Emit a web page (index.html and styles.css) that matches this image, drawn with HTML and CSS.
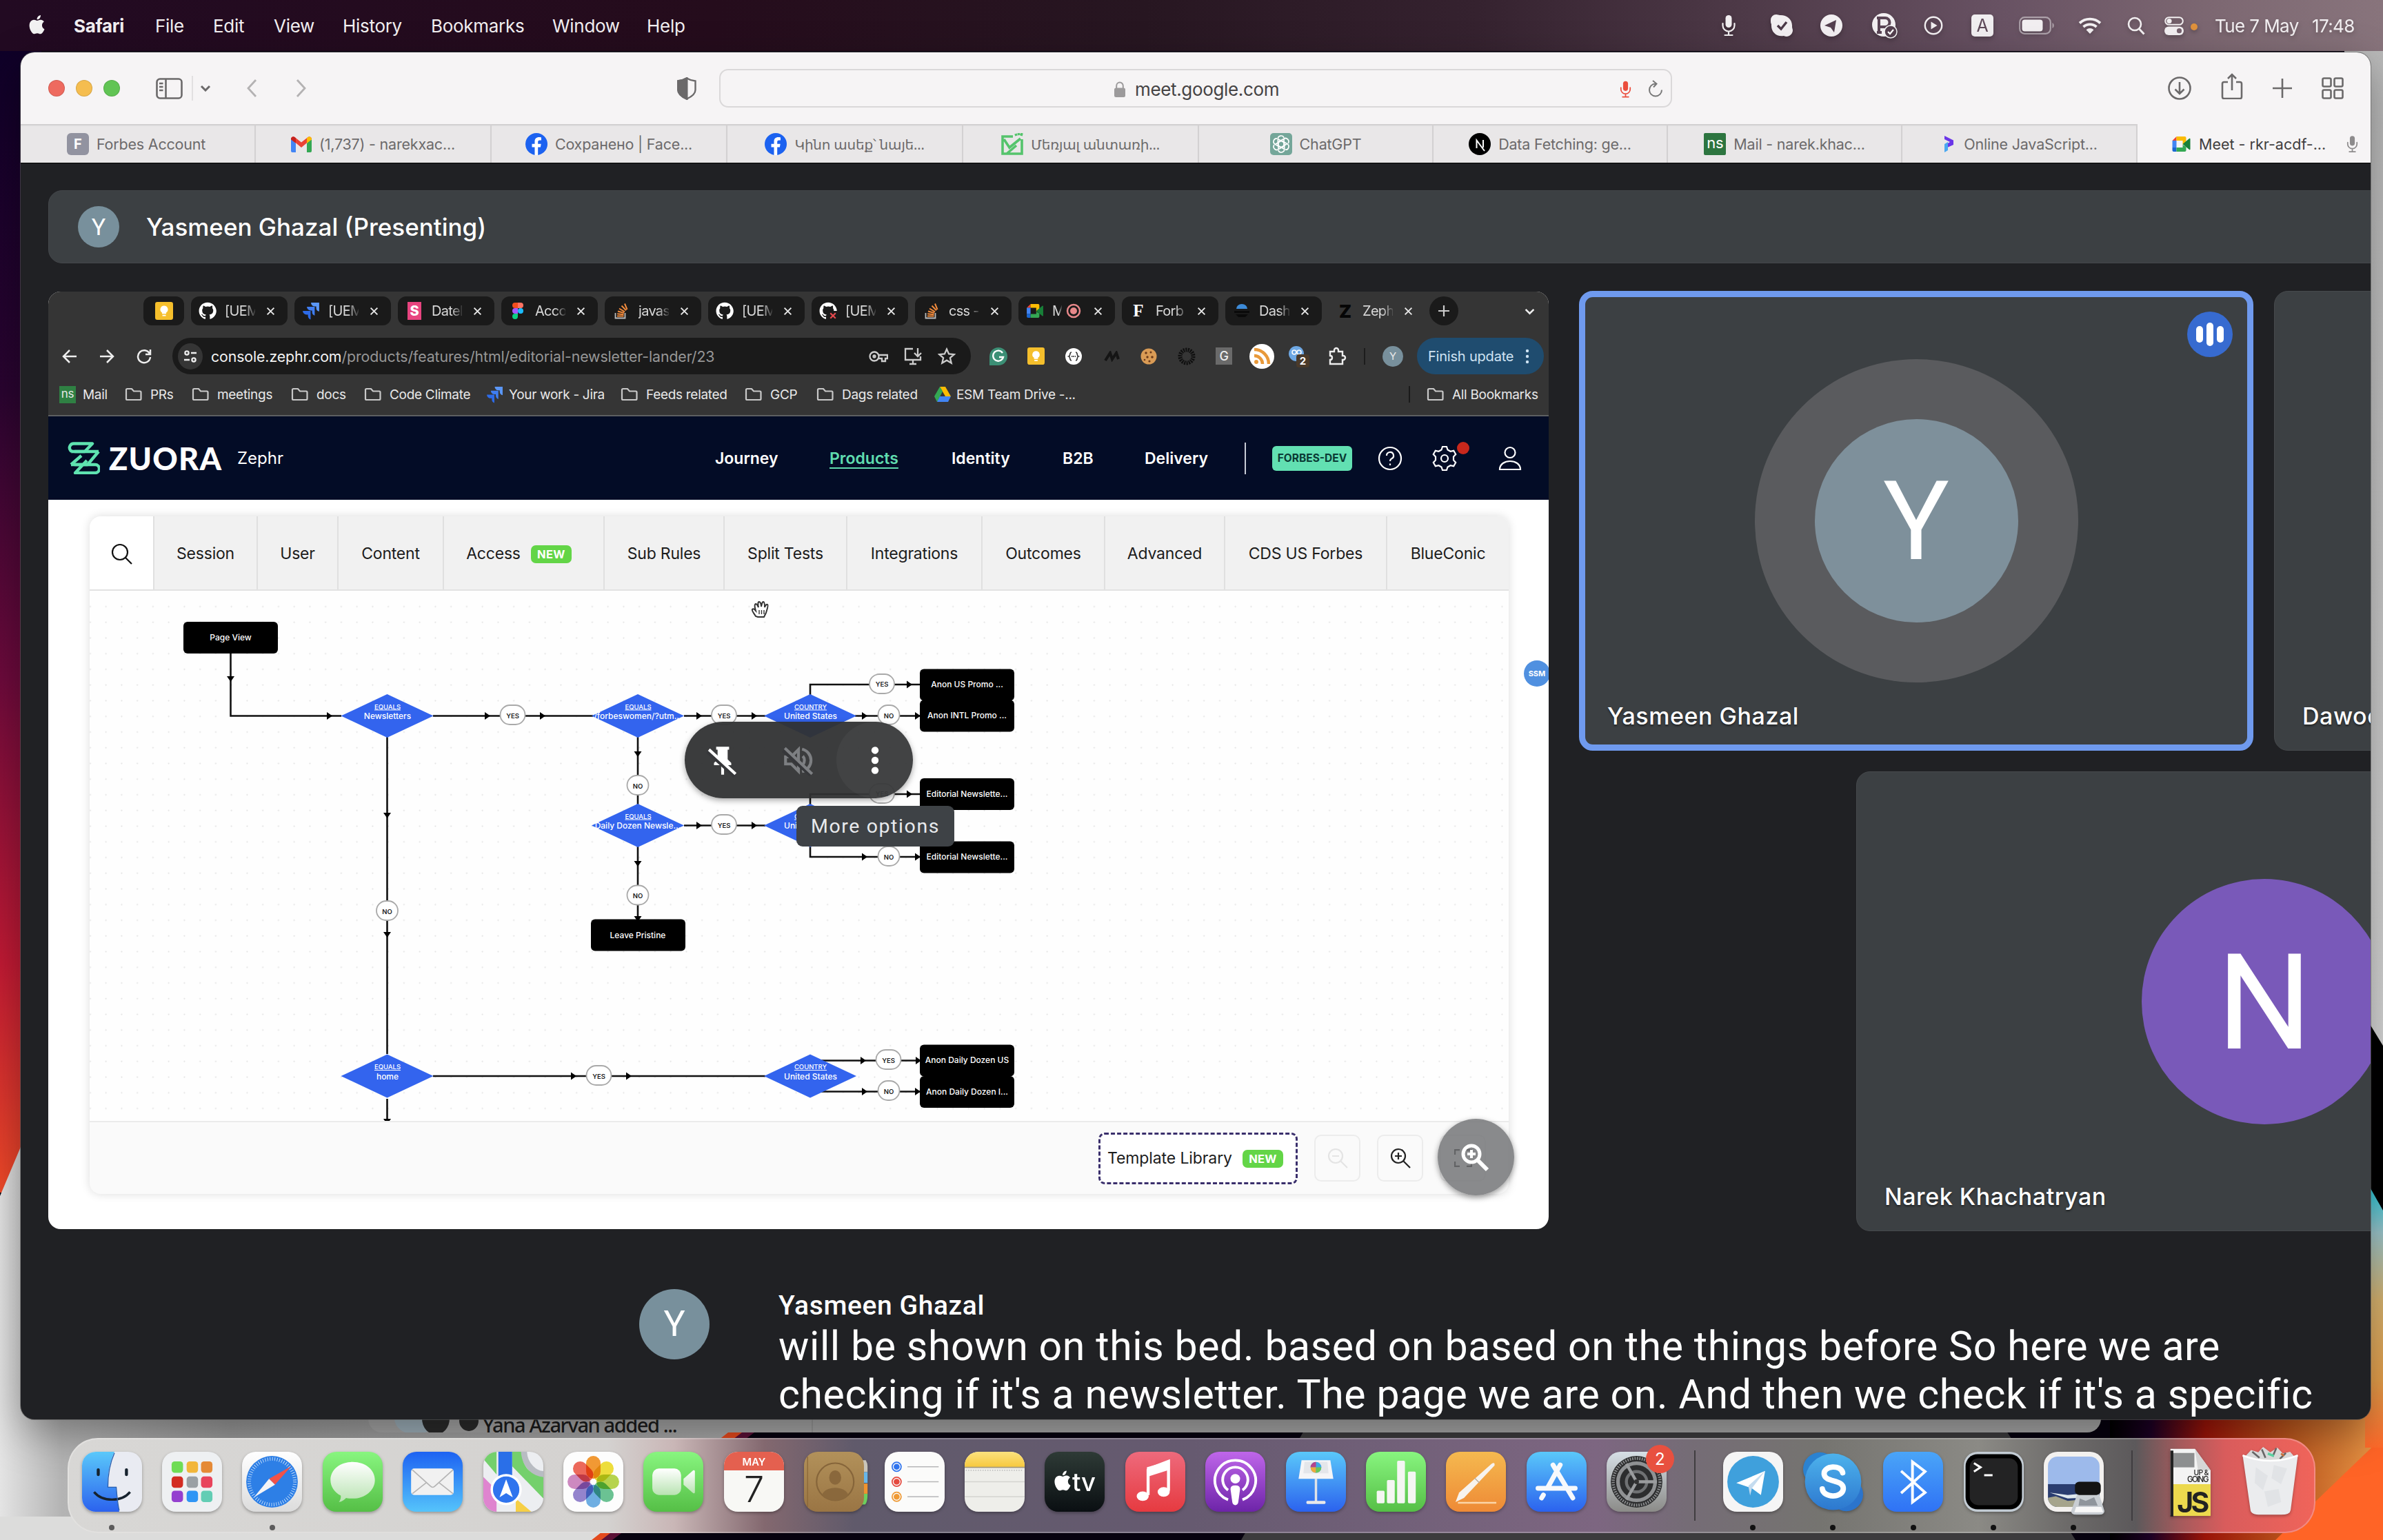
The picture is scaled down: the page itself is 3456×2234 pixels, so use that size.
FILE: index.html
```html
<!DOCTYPE html>
<html lang="en">
<head>
<meta charset="utf-8">
<title>Meet</title>
<link rel="stylesheet" href="styles.css">
</head>
<body>
<svg class="sprite" aria-hidden="true">
  <defs>
    <symbol id="i-apple" viewBox="0 0 24 28"><path d="M19.700 15c0-3 2.400-4.400 2.500-4.500-1.400-2-3.500-2.300-4.300-2.300-1.800-.2-3.500 1.100-4.400 1.100-.9 0-2.300-1.100-3.800-1-2 0-3.800 1.100-4.800 2.900-2 3.500-.5 8.800 1.500 11.700 1 1.400 2.100 3 3.600 2.900 1.500-.1 2-.9 3.800-.9s2.300.9 3.800.9c1.600 0 2.600-1.400 3.500-2.800 1.100-1.600 1.600-3.200 1.600-3.300 0 0-3-1.200-3-4.700zM16.800 6.200c.8-1 1.300-2.300 1.200-3.700-1.200.1-2.600.8-3.400 1.800-.8.9-1.400 2.200-1.200 3.500 1.300.1 2.600-.6 3.400-1.600z"/></symbol>
    <symbol id="i-mic" viewBox="0 0 24 32"><rect x="7.500" y="1" width="9" height="18" rx="4.500"/><path d="M3.500 13v3a8.500 8.500 0 0 0 17 0v-3M12 25v5M6.500 30h11" fill="none" stroke="currentColor" stroke-width="2.200" stroke-linecap="round"/></symbol>
    <symbol id="i-close" viewBox="0 0 12 12"><path d="M1.500 1.500l9 9M10.500 1.500l-9 9" stroke="currentColor" stroke-width="1.800" fill="none"/></symbol>
    <symbol id="i-folder" viewBox="0 0 25 20"><path d="M2 3.500A1.500 1.500 0 0 1 3.500 2h6.500l3 3.500h9A1.500 1.500 0 0 1 23.500 7v9.500A1.500 1.500 0 0 1 22 18H3.500A1.500 1.500 0 0 1 2 16.500z" fill="none" stroke="currentColor" stroke-width="2.200"/></symbol>
    <symbol id="i-github" viewBox="0 0 24 24"><path d="M12 .6C5.600.6.500 5.700.500 12c0 5.100 3.300 9.400 7.900 10.900.6.100.8-.2.800-.6v-2.200c-3.200.7-3.900-1.400-3.900-1.400-.5-1.300-1.300-1.700-1.300-1.700-1-.7.100-.7.100-.7 1.200.1 1.800 1.200 1.800 1.200 1 1.800 2.700 1.300 3.400 1 .1-.8.400-1.300.7-1.500-2.500-.3-5.200-1.300-5.200-5.700 0-1.300.4-2.300 1.200-3.100-.1-.3-.5-1.500.1-3 0 0 1-.3 3.200 1.200a11 11 0 0 1 5.800 0C17.300 4.900 18.300 5.200 18.300 5.200c.6 1.500.2 2.700.1 3 .7.800 1.200 1.800 1.200 3.100 0 4.400-2.700 5.400-5.300 5.700.4.400.8 1.100.8 2.100v3.200c0 .3.200.7.800.6 4.600-1.500 7.900-5.800 7.900-10.900C23.500 5.700 18.400.6 12 .6z"/></symbol>
    <symbol id="i-jira" viewBox="0 0 24 24"><path d="M23 1H12a5 5 0 0 0 5 5h2v2a5 5 0 0 0 4 4.800z" fill="#5b97f7"/><path d="M17 6.500H6.500a5 5 0 0 0 5 5h2v2a5 5 0 0 0 3.500 4.700z" fill="#3f7df0"/><path d="M11.500 12H1a5 5 0 0 0 5 5h2v2a5 5 0 0 0 3.500 4.500z" fill="#2d6be8"/></symbol>
    <symbol id="i-stack" viewBox="0 0 24 24"><path d="M3.500 15v7.500h14V15" fill="none" stroke="#bbb" stroke-width="1.800"/><path d="M6 19.500h9.500M6.200 16.300l9.300.9M7 12.500l9 2.500M9 8.500l8 4.800M12.500 4.500l6.500 6.800M17 1.500l3.500 8.500" stroke="#f08a3c" stroke-width="2" fill="none"/></symbol>
    <symbol id="i-keep" viewBox="0 0 24 24"><rect width="24" height="24" rx="3" fill="#f5bf2c"/><path d="M12 5a5 5 0 0 0-2.800 9.200V16h5.600v-1.800A5 5 0 0 0 12 5zM9.700 17.200h4.600V19H9.700z" fill="#fff"/></symbol>
    <symbol id="i-meet" viewBox="0 0 28 24"><path d="M1 7l6-6v6z" fill="#ea4335"/><path d="M7 1h12a2 2 0 0 1 2 2v7l-5 3V7H7z" fill="#fbbc04"/><path d="M1 7h6v10H1z" fill="#4285f4"/><path d="M1 17h6v6H3a2 2 0 0 1-2-2z" fill="#1967d2"/><path d="M7 17h9v-4l5 3v5a2 2 0 0 1-2 2H7z" fill="#34a853"/><path d="M16 12l9.500-8c.8-.6 1.500-.2 1.500.7v14.600c0 .9-.7 1.300-1.500.7z" fill="#188038"/></symbol>
    <symbol id="i-fb" viewBox="0 0 32 32"><circle cx="16" cy="16" r="16" fill="#1c62f0"/><path d="M13.500 32V20.500H9.500v-4.700h4v-3.500c0-4.200 2.400-6.300 6.100-6.300 1.300 0 2.600.2 3.400.4v4h-2.300c-1.900 0-2.500 1-2.500 2.400v3h4.500l-.8 4.700h-3.700V32z" fill="#fff"/></symbol>
    <symbol id="i-zin" viewBox="0 0 32 32"><circle cx="13" cy="13" r="10" fill="none" stroke="currentColor" stroke-width="2.200"/><path d="M20.500 20.500L30 30M13 8v10M8 13h10" stroke="currentColor" stroke-width="2.200" fill="none"/></symbol>
    <symbol id="i-zout" viewBox="0 0 32 32"><circle cx="13" cy="13" r="10" fill="none" stroke="currentColor" stroke-width="2.200"/><path d="M20.500 20.500L30 30M8 13h10" stroke="currentColor" stroke-width="2.200" fill="none"/></symbol>
    <linearGradient id="g-blue" x2="0" y2="1"><stop stop-color="#1d62f2"/><stop offset="1" stop-color="#55c4fb"/></linearGradient>
    <linearGradient id="g-blue2" x2="0" y2="1"><stop stop-color="#5ac8fa"/><stop offset="1" stop-color="#2b62ee"/></linearGradient>
    <linearGradient id="g-sky" x2="0" y2="1"><stop stop-color="#4db2ec"/><stop offset="1" stop-color="#2d78cf"/></linearGradient>
    <linearGradient id="g-bt" x2="0" y2="1"><stop stop-color="#4aa5f8"/><stop offset="1" stop-color="#2f72f5"/></linearGradient>
    <linearGradient id="g-green" x2="0" y2="1"><stop stop-color="#88f57f"/><stop offset="1" stop-color="#55bf46"/></linearGradient>
    <linearGradient id="g-white" x2="0" y2="1"><stop stop-color="#fff"/><stop offset="1" stop-color="#dcdcdc"/></linearGradient>
    <linearGradient id="g-bubble" x2="0" y2="1"><stop stop-color="#fff"/><stop offset="1" stop-color="#b9e3b2"/></linearGradient>
    <linearGradient id="g-red" x2="0" y2="1"><stop stop-color="#ee6a7c"/><stop offset="1" stop-color="#e63a40"/></linearGradient>
    <linearGradient id="g-purple" x2="0" y2="1"><stop stop-color="#bf66ea"/><stop offset="1" stop-color="#6d24a8"/></linearGradient>
    <linearGradient id="g-orange" x2="0" y2="1"><stop stop-color="#f5b94f"/><stop offset="1" stop-color="#ee8a36"/></linearGradient>
    <linearGradient id="g-tv" x2="0" y2="1"><stop stop-color="#2e3a36"/><stop offset="1" stop-color="#0a0f12"/></linearGradient>
    <linearGradient id="g-gold" x2="0" y2="1"><stop stop-color="#fbe27e"/><stop offset="1" stop-color="#f7c83c"/></linearGradient>
    <linearGradient id="g-brown" x2="0" y2="1"><stop stop-color="#b2915a"/><stop offset="1" stop-color="#9a7544"/></linearGradient>
    <linearGradient id="g-grey" x2="0" y2="1"><stop stop-color="#d6dfe6"/><stop offset="1" stop-color="#8b8b88"/></linearGradient>
    <linearGradient id="g-left" x2="0" y2="1"><stop stop-color="#0f0028"/><stop offset=".3" stop-color="#2a0430"/><stop offset=".55" stop-color="#6d0a3c"/><stop offset=".8" stop-color="#c21a34"/><stop offset="1" stop-color="#f04a28"/></linearGradient>
    <linearGradient id="g-right" x2="0" y2="1"><stop stop-color="#b9b9b9"/><stop offset="1" stop-color="#d8d8d8"/></linearGradient>
    <linearGradient id="g-right2" x2="0" y2="1"><stop stop-color="#12c8dc"/><stop offset=".2" stop-color="#9cc6cc"/><stop offset=".45" stop-color="#d8b470"/><stop offset=".75" stop-color="#e8a14c"/><stop offset="1" stop-color="#ff6a2a"/></linearGradient>
    <linearGradient id="g-floor"><stop offset="0" stop-color="#e4e4e4"/><stop offset=".08" stop-color="#b4b4b4"/><stop offset=".3" stop-color="#999"/><stop offset="1" stop-color="#a8a8a8"/></linearGradient>
    <linearGradient id="g-fire"><stop offset="0" stop-color="#000"/><stop offset=".15" stop-color="#1c0024"/><stop offset=".35" stop-color="#9a1408"/><stop offset=".65" stop-color="#b8541c"/><stop offset="1" stop-color="#ec9a48"/></linearGradient>
  </defs>
</svg>

<svg class="wallpaper" viewBox="0 0 3456 2234" aria-hidden="true">
  <rect width="3456" height="2234" fill="#07020f"/>
  <rect y="70" width="60" height="1660" fill="url(#g-left)"/>
  <path d="M0 1735L40 1640V2040H1110L860 2234H0z" fill="url(#g-floor)"/>
  <path d="M0 2200H900L860 2234H0z" fill="#dcdcdb"/>
  <path d="M1056 2078h34l-206 156h-26z" fill="#e3491d"/>
  <path d="M1076 2078h18l-206 156h-16z" fill="#5a1036"/>
  <path d="M1900 2060h1000l110 174H1800z" fill="#3c3b3d"/>
  <rect x="3060" y="1990" width="396" height="244" fill="url(#g-fire)"/>
  <path d="M3300 2234l156-150v150z" fill="#ff6426"/>
  <rect x="3400" y="60" width="56" height="1480" fill="url(#g-right)"/>
  <path d="M3400 1425l56 92V1760h-56z" fill="#000"/>
  <path d="M3430 1710l26 46V2100h-26z" fill="url(#g-right2)"/>
</svg>

<header class="menubar">
  <div class="menus">
    <svg class="apple"><use href="#i-apple"/></svg>
    <b>Safari</b><span>File</span><span>Edit</span><span>View</span><span>History</span><span>Bookmarks</span><span>Window</span><span>Help</span>
  </div>
  <div class="status">
    <svg width="24" height="32"><use href="#i-mic"/></svg>
    <svg width="34" height="34" viewBox="0 0 34 34"><path d="M9 1c2 0 4 1 5 1 9-1 19 5 18 17 0 2 1 3 1 5a9 9 0 0 1-13 8C10 34 1 27 2 15 1 14 1 12 1 9a8 8 0 0 1 8-8z"/><path d="M11 17l5 5 8-10" fill="none" stroke="#4c3a48" stroke-width="3.500"/></svg>
    <svg width="34" height="34" viewBox="0 0 34 34"><circle cx="17" cy="17" r="16"/><path d="M7 17l17-8-3 18-5-7z" fill="#54404f"/></svg>
    <svg width="38" height="38" viewBox="0 0 38 38"><circle cx="18" cy="18" r="17"/><path d="M11 29V8h9a6.500 6.500 0 0 1 0 13h-9M8 8h5M8 29h7" fill="none" stroke="#5a4555" stroke-width="4"/><circle cx="28" cy="28" r="9" fill="#54404f" stroke="#f2f2f2" stroke-width="1.500"/><path d="M24 28l3 3 5-6" fill="none" stroke="#fff" stroke-width="2.200"/></svg>
    <svg width="28" height="28" viewBox="0 0 28 28"><circle cx="14" cy="14" r="12.200" fill="none" stroke="currentColor" stroke-width="2.400"/><path d="M10.500 8.500v11l9-5.500z"/></svg>
    <i class="input-a">A</i>
    <svg width="52" height="26" viewBox="0 0 52 26"><rect x="1.200" y="1.200" width="44.600" height="23.600" rx="7" fill="none" stroke="currentColor" stroke-opacity=".5" stroke-width="2.200"/><rect x="4.500" y="4.500" width="30" height="17" rx="4"/><path d="M48.500 9v8c3-1.500 3-6.500 0-8z" opacity=".5"/></svg>
    <svg width="34" height="26" viewBox="0 0 34 26"><path d="M2 9.500a22 22 0 0 1 30 0M7.500 15a14 14 0 0 1 19 0" fill="none" stroke="currentColor" stroke-width="3.800"/><path d="M17 25l-5.500-5.800a8 8 0 0 1 11 0z"/></svg>
    <svg width="26" height="27" viewBox="0 0 26 27"><circle cx="11" cy="11" r="9" fill="none" stroke="currentColor" stroke-width="2.600"/><path d="M17.500 18l7 7.500" stroke="currentColor" stroke-width="3"/></svg>
    <svg width="28" height="27" viewBox="0 0 28 27"><rect x="1.200" y="1.200" width="25.600" height="10.600" rx="5.300" fill="none" stroke="currentColor" stroke-width="2"/><circle cx="7" cy="6.500" r="3.600"/><rect y="14.500" width="28" height="12.500" rx="6.200"/><circle cx="21.500" cy="20.700" r="3.600" fill="#77636f"/></svg>
    <i class="privacy-dot"></i>
    <span class="date">Tue 7 May</span><span class="time">17:48</span>
  </div>
</header>

<main class="desktop">
  <section class="chat-window">
    <div class="chat-row"><i class="av0"></i><i class="av1"></i><i class="av2"></i><span>Yana Azaryan added ...</span></div>
  </section>

  <section class="safari">
    <div class="toolbar">
      <div class="lights"><i class="red"></i><i class="yellow"></i><i class="green"></i></div>
      <svg class="sidebar-ic" viewBox="0 0 39 31"><rect x="1.500" y="1.500" width="36" height="28" rx="4.500"/><path d="M14.500 2v27M5 8h5.500M5 13h5.500M5 18h5.500"/></svg>
      <i class="tsep"></i>
      <svg class="chev" viewBox="0 0 16 10"><path d="M2 2l6 6 6-6"/></svg>
      <svg class="nav-ic" viewBox="0 0 16 28"><path d="M14 2L3 14l11 12"/></svg>
      <svg class="nav-ic next" viewBox="0 0 16 28"><path d="M2 2l11 12L2 26"/></svg>
      <svg class="shield" viewBox="0 0 28 33"><path d="M14 1.500C10 4 6 5 1.500 5.500v13c0 6 6 10 12.500 13 6.500-3 12.500-7 12.500-13v-13C22 5 18 4 14 1.500z" fill="none" stroke="#6b696a" stroke-width="2.400"/><path d="M14 1.500C10 4 6 5 1.500 5.500v13c0 6 6 10 12.500 13z" fill="#6b696a"/></svg>
      <div class="address">
        <svg class="lock" viewBox="0 0 16 23"><rect y="9.500" width="16" height="13.500" rx="2.500"/><path d="M3.200 10V6.500a4.800 5 0 0 1 9.600 0V10" fill="none" stroke="#9c9a9b" stroke-width="2"/></svg>
        <span>meet.google.com</span>
        <svg class="rec" viewBox="0 0 24 32"><use href="#i-mic"/></svg>
        <svg class="reload" viewBox="0 0 24 26"><path d="M12 5.500a9 9 0 1 0 9 9M8 1l5.500 4.500L9 10.500" fill="none" stroke="#777" stroke-width="2"/></svg>
      </div>
      <div class="tools">
        <svg width="34" height="34" viewBox="0 0 34 34"><circle cx="17" cy="17" r="15.500"/><path d="M17 8v17M10.500 18.500L17 25l6.500-6.500"/></svg>
        <svg width="32" height="38" viewBox="0 0 32 38"><path d="M10 13H4.500A2.500 2.500 0 0 0 2 15.500v19A2.500 2.500 0 0 0 4.500 37h23a2.500 2.500 0 0 0 2.500-2.500v-19a2.500 2.500 0 0 0-2.500-2.500H22M16 25V2M10 8l6-6 6 6"/></svg>
        <svg width="28" height="28" viewBox="0 0 28 28"><path d="M14 0v28M0 14h28"/></svg>
        <svg width="32" height="32" viewBox="0 0 32 32"><rect x="1.500" y="1.500" width="12" height="12" rx="2"/><rect x="18.500" y="1.500" width="12" height="12" rx="2"/><rect x="1.500" y="18.500" width="12" height="12" rx="2"/><rect x="18.500" y="18.500" width="12" height="12" rx="2"/></svg>
      </div>
    </div>

    <nav class="tabs">
      <div class="tab"><i class="fav fav-f">F</i><span>Forbes Account</span></div>
      <div class="tab"><svg width="30" height="23" viewBox="0 0 30 23"><path d="M0 2v19a2 2 0 0 0 2 2h5V10z" fill="#4285f4"/><path d="M30 2v19a2 2 0 0 1-2 2h-5V10z" fill="#34a853"/><path d="M0 3.500C0 .5 3.500-.8 5.500 1L15 8.500 24.500 1C26.500-.8 30 .5 30 3.500L15 16z" fill="#ea4335"/><path d="M30 3.500C30 .5 26.500-.8 24.500 1L23 2.200v7.500l7-5.300z" fill="#fbbc04"/><path d="M0 3.500C0 .5 3.500-.8 5.500 1L7 2.200v7.500L0 4.400z" fill="#c5221f"/></svg><span>(1,737) - narekxac...</span></div>
      <div class="tab"><svg width="32" height="32"><use href="#i-fb"/></svg><span>Сохранено | Face...</span></div>
      <div class="tab"><svg width="32" height="32"><use href="#i-fb"/></svg><span class="hy">Կինո ասեք՝ նայե...</span></div>
      <div class="tab"><svg width="32" height="32" viewBox="0 0 32 32"><path d="M17 5H2v25h28V9M4 9l8 12L28 8M8 30L22 18M21 1l1 3M25 0l1 3M30 0l-1 4" fill="none" stroke="#55c46c" stroke-width="3.600"/></svg><span class="hy">Մեռյալ անտառի...</span></div>
      <div class="tab"><svg width="32" height="32" viewBox="0 0 32 32"><rect width="32" height="32" rx="5" fill="#74a699"/><g fill="none" stroke="#fff" stroke-width="1.700" transform="translate(16 16)"><path id="petal" d="M-4 7V-2.500a1 1 0 0 1 .5-.9L3.800-7.600A4.600 4.600 0 0 1 10-1"/><use href="#petal" transform="rotate(60)"/><use href="#petal" transform="rotate(120)"/><use href="#petal" transform="rotate(180)"/><use href="#petal" transform="rotate(240)"/><use href="#petal" transform="rotate(300)"/></g></svg><span>ChatGPT</span></div>
      <div class="tab"><svg width="32" height="32" viewBox="0 0 32 32"><circle cx="16" cy="16" r="16"/><path d="M11.500 22V10.500L23 26M21 10v11" fill="none" stroke="#fff" stroke-width="2"/></svg><span>Data Fetching: ge...</span></div>
      <div class="tab"><i class="fav fav-ns">ns</i><span>Mail - narek.khac...</span></div>
      <div class="tab"><svg width="22" height="24" viewBox="0 0 22 24"><path d="M5 0l13 6.500V13L8 17.500V12l5-3-8-4z" fill="#6a35e8"/><path d="M5 24V12l5-3v12z" fill="#4aa8f0"/></svg><span>Online JavaScript...</span></div>
      <div class="tab active"><svg width="29" height="24"><use href="#i-meet"/></svg><span>Meet - rkr-acdf-...</span><svg class="tabmic" width="19" height="26" viewBox="0 0 24 32"><use href="#i-mic"/></svg></div>
    </nav>

    <div class="meet">
      <div class="presenter"><i class="avatar">Y</i><span>Yasmeen Ghazal (Presenting)</span></div>

      <div class="stage">
        <div class="screen">
          <div class="c-tabs">
            <div class="c-tab pin"><svg width="26" height="26"><use href="#i-keep"/></svg></div>
            <div class="c-tab"><svg width="26" height="26" fill="#fff"><use href="#i-github"/></svg><span>[UEM</span><svg class="x"><use href="#i-close"/></svg></div>
            <div class="c-tab"><svg width="26" height="26"><use href="#i-jira"/></svg><span>[UEM</span><svg class="x"><use href="#i-close"/></svg></div>
            <div class="c-tab"><i class="sb">S</i><span>DateI</span><svg class="x"><use href="#i-close"/></svg></div>
            <div class="c-tab"><svg width="26" height="24" viewBox="0 0 26 24"><path d="M5 4a4 4 0 0 1 4-4h4v8H9a4 4 0 0 1-4-4z" fill="#f24e1e"/><path d="M13 0h4a4 4 0 0 1 0 8h-4z" fill="#ff7262"/><path d="M5 12a4 4 0 0 1 4-4h4v8H9a4 4 0 0 1-4-4z" fill="#a259ff"/><circle cx="17" cy="12" r="4" fill="#1abcfe"/><path d="M5 20a4 4 0 0 1 4-4h4v4a4 4 0 0 1-8 0z" fill="#0acf83"/></svg><span>Acco</span><svg class="x"><use href="#i-close"/></svg></div>
            <div class="c-tab"><svg width="26" height="24"><use href="#i-stack"/></svg><span>javas</span><svg class="x"><use href="#i-close"/></svg></div>
            <div class="c-tab"><svg width="26" height="26" fill="#fff"><use href="#i-github"/></svg><span>[UEM</span><svg class="x"><use href="#i-close"/></svg></div>
            <div class="c-tab"><svg width="26" height="26" viewBox="0 0 24 24"><use href="#i-github" fill="#fff"/><path d="M12 12h12v12H12z" fill="#1a1a1a"/><path d="M15 15l7 7M22 15l-7 7" stroke="#e5484d" stroke-width="2"/></svg><span>[UEM</span><svg class="x"><use href="#i-close"/></svg></div>
            <div class="c-tab"><svg width="26" height="24"><use href="#i-stack"/></svg><span>css -</span><svg class="x"><use href="#i-close"/></svg></div>
            <div class="c-tab rec-tab"><svg width="26" height="22"><use href="#i-meet"/></svg><span>M</span><svg width="22" height="22" viewBox="0 0 22 22"><circle cx="11" cy="11" r="9" fill="none" stroke="#e8888a" stroke-width="2.500"/><circle cx="11" cy="11" r="5" fill="#e8888a"/></svg><svg class="x"><use href="#i-close"/></svg></div>
            <div class="c-tab"><i class="ff">F</i><span>Forb</span><svg class="x"><use href="#i-close"/></svg></div>
            <div class="c-tab"><svg width="26" height="22" viewBox="0 0 26 22"><path d="M5 8a8 7 0 0 1 16 0z" fill="#3d8bd8"/><path d="M2 11h22v3H2zM4 16h18l-4 4H8z" fill="#0a0a0a"/></svg><span>Dash</span><svg class="x"><use href="#i-close"/></svg></div>
            <div class="c-tab on"><i class="zz">Z</i><span>Zeph</span><svg class="x"><use href="#i-close"/></svg></div>
            <div class="c-new"><svg width="18" height="18" viewBox="0 0 18 18"><path d="M9 1v16M1 9h16" stroke="#ccc" stroke-width="2.200"/></svg></div>
            <svg class="c-chev" viewBox="0 0 14 9"><path d="M1.500 1.500L7 7l5.500-5.500" fill="none" stroke="#eee" stroke-width="2.400"/></svg>
          </div>

          <div class="c-bar">
            <svg width="54" height="24" viewBox="-15 0 54 24"><path d="M22 12H3M12 3l-9 9 9 9"/></svg>
            <svg width="54" height="24" viewBox="-15 0 54 24"><path d="M2 12h19M12 3l9 9-9 9"/></svg>
            <svg width="54" height="24" viewBox="-15 0 54 24"><path d="M20 8a9 9 0 1 0 1 5M21 2v7h-7"/></svg>
            <div class="omni">
              <i class="tune"><svg width="20" height="20" viewBox="0 0 20 20"><circle cx="5" cy="5" r="2.600"/><path d="M11 5h8M1 15h8"/><circle cx="15" cy="15" r="2.600"/></svg></i>
              <span class="url"><b>console.zephr.com</b>/products/features/html/editorial-newsletter-lander/23</span>
              <svg width="28" height="20" viewBox="0 0 28 20"><circle cx="8" cy="10" r="6.500"/><circle cx="8" cy="10" r="1.500"/><path d="M14 8h13v5h-3v4h-5v-4h-5"/></svg>
              <svg width="28" height="26" viewBox="0 0 28 26"><path d="M14 2H3v16h22v-5M9 24h10M14 18v6M21 1v11M16 8l5 5 5-5"/></svg>
              <svg width="26" height="26" viewBox="0 0 26 26"><path d="M13 2.500l3.100 7 7.600.7-5.800 5 1.800 7.500-6.700-4-6.700 4 1.800-7.500-5.800-5 7.600-.7z"/></svg>
            </div>
            <div class="exts">
              <i><svg width="26" height="26" viewBox="0 0 26 26"><path d="M13 0a13 13 0 1 1 0 26H0V13A13 13 0 0 1 13 0z" fill="#3c8f75"/><path d="M19 8a7.500 7.500 0 1 0 1 6h-6" fill="none" stroke="#fff" stroke-width="2.400"/></svg></i>
              <i><svg width="25" height="25"><use href="#i-keep"/></svg></i>
              <i><svg width="24" height="24" viewBox="0 0 24 24"><circle cx="12" cy="12" r="12" fill="#fff"/><path d="M9 6c-3.500 0-1 5-4 6 3 1 .5 6 4 6M15 6c3.500 0 1 5 4 6-3 1-.5 6-4 6" fill="none" stroke="#333" stroke-width="1.600"/><path d="M9 12h6" stroke="#333" stroke-width="2" stroke-dasharray="1.500 1"/></svg></i>
              <i><svg width="24" height="16" viewBox="0 0 24 16"><path d="M3 14L10 3l3 9 6-9 3 9" fill="none" stroke="#151515" stroke-width="4"/></svg></i>
              <i><svg width="24" height="24" viewBox="0 0 24 24"><circle cx="12" cy="12" r="11.500" fill="#d99b55"/><g fill="#6b3a1a"><circle cx="8" cy="7" r="1.700"/><circle cx="15" cy="6" r="1.500"/><circle cx="17" cy="13" r="1.800"/><circle cx="10" cy="13" r="1.700"/><circle cx="13" cy="19" r="1.600"/><circle cx="6" cy="17" r="1.300"/></g></svg></i>
              <i><svg width="26" height="26" viewBox="0 0 26 26"><circle cx="13" cy="13" r="9.500" fill="none" stroke="#0f0f0f" stroke-width="6" stroke-dasharray="2 1.300"/></svg></i>
              <i><b class="gsq">G</b></i>
              <i><svg width="36" height="36" viewBox="0 0 36 36"><circle cx="18" cy="18" r="18" fill="#fff"/><circle cx="10" cy="26" r="3" fill="#e8993a"/><path d="M7 17a12 12 0 0 1 12 12M7 8a21 21 0 0 1 21 21" fill="none" stroke="#e8993a" stroke-width="4.500"/></svg></i>
              <i><svg width="32" height="32" viewBox="0 0 32 32"><circle cx="12" cy="12" r="11" fill="#6ea8e4"/><circle cx="9" cy="10" r="3" fill="none" stroke="#fff" stroke-width="1.500"/><circle cx="16" cy="10" r="3" fill="none" stroke="#fff" stroke-width="1.500"/><rect x="12" y="13" width="19" height="19" rx="4" fill="#4a3a2a"/><text x="21.500" y="28" font-size="15" font-weight="700" text-anchor="middle" fill="#fff">2</text></svg></i>
              <i><svg width="28" height="28" viewBox="0 0 28 28"><path d="M4 7h6V5a3 3 0 0 1 6 0v2h6v6h1a3 3 0 0 1 0 6h-1v6H4v-6c4 0 4-6 0-6z" fill="none" stroke="#eee" stroke-width="2.400"/></svg></i>
            </div>
            <i class="c-sep"></i>
            <i class="c-av">Y</i>
            <div class="finish">Finish update<svg width="6" height="22" viewBox="0 0 6 22"><circle cx="3" cy="3" r="2.200"/><circle cx="3" cy="11" r="2.200"/><circle cx="3" cy="19" r="2.200"/></svg></div>
          </div>

          <div class="c-marks">
            <div><i class="ns2">ns</i>Mail</div>
            <div><svg class="fold"><use href="#i-folder"/></svg>PRs</div>
            <div><svg class="fold"><use href="#i-folder"/></svg>meetings</div>
            <div><svg class="fold"><use href="#i-folder"/></svg>docs</div>
            <div><svg class="fold"><use href="#i-folder"/></svg>Code Climate</div>
            <div class="tight"><svg width="25" height="25"><use href="#i-jira"/></svg>Your work - Jira</div>
            <div><svg class="fold"><use href="#i-folder"/></svg>Feeds related</div>
            <div><svg class="fold"><use href="#i-folder"/></svg>GCP</div>
            <div><svg class="fold"><use href="#i-folder"/></svg>Dags related</div>
            <div class="tight"><svg width="24" height="22" viewBox="0 0 24 22"><path d="M8 0h8l8 14h-8z" fill="#fbbc04"/><path d="M8 0l4 7-8 15-4-8z" fill="#34a853"/><path d="M8 14h16l-4 8H4z" fill="#4285f4"/></svg>ESM Team Drive -...</div>
            <i class="msep"></i>
            <div><svg class="fold"><use href="#i-folder"/></svg>All Bookmarks</div>
          </div>

          <div class="z-head">
            <svg class="z-mark" viewBox="0 0 47 47"><g fill="none" stroke="#5fe3b0" stroke-width="4.400" stroke-linejoin="round"><path d="M5 14h20L36 2.500H9A6 6 0 0 0 4 12q1 2 5 2"/><path d="M10 14h24l11 0M5 33L20 20M5 33h24L45 14"/><path d="M10 33h30a6 6 0 0 1 0 12H11l17-18"/></g></svg>
            <strong>ZUORA</strong><span class="z-name">Zephr</span>
            <nav><span>Journey</span><span class="cur">Products</span><span>Identity</span><span>B2B</span><span>Delivery</span></nav>
            <i class="z-sep"></i>
            <em>FORBES-DEV</em>
            <svg class="q" width="36" height="36" viewBox="0 0 36 36"><circle cx="18" cy="18" r="16"/><path d="M13 14a5 5 0 1 1 7 4.500c-1.500.8-2 1.500-2 3.500M18 25.500v2.500"/></svg>
            <svg class="gear" width="54" height="54" viewBox="0 0 54 54"><path d="M15 12h6l1.500 4.500 4 2.300 4.700-1 3 5.200-3.200 3.600v4.800l3.200 3.600-3 5.200-4.700-1-4 2.300L21 46h-6l-1.500-4.500-4-2.300-4.700 1-3-5.200L5 31.400v-4.800L1.800 23l3-5.200 4.700 1 4-2.300z" transform="translate(0 -2)"/><circle cx="18" cy="27" r="5"/><circle cx="45" cy="12" r="9" fill="#c9281c" stroke="none"/></svg>
            <svg width="34" height="36" viewBox="0 0 34 36"><circle cx="17" cy="9.500" r="7.500"/><path d="M2 34c0-16 30-16 30 0z"/></svg>
          </div>

          <div class="z-body">
            <div class="card">
              <div class="rules">
                <div class="srch"><svg width="31" height="31" viewBox="0 0 31 31"><circle cx="13" cy="13" r="11"/><path d="M21 21l9 9"/></svg></div>
                <div>Session</div><div>User</div><div>Content</div><div class="acc">Access<em class="new">NEW</em></div><div>Sub Rules</div><div>Split Tests</div><div>Integrations</div><div>Outcomes</div><div>Advanced</div><div>CDS US Forbes</div><div>BlueConic</div>
              </div>
              <svg class="flow" viewBox="130 856 2058 769">
                <defs>
                  <pattern id="dots" x="119.500" y="867.500" width="22.750" height="22.750" patternUnits="userSpaceOnUse"><circle cx="11.400" cy="11.400" r="1.100" fill="#e2e2e2"/></pattern>
                  <path id="ar" d="M-7-5.500L1 0l-8 5.500z"/>
                  <path id="dia" d="M-67 0L0-31.500 67 0 0 31.500z"/>
                  <rect id="box" x="-68.500" y="-23" width="137" height="46" rx="6"/>
                  <rect id="py" x="-18" y="-14" width="36" height="28" rx="14"/>
                  <rect id="pn" x="-15.500" y="-14" width="31" height="28" rx="14"/>
                </defs>
                <rect x="130" y="856" width="2058" height="769" fill="#fefefe"/>
                <rect x="130" y="862" width="2058" height="763" fill="url(#dots)"/>
                <path class="edge" d="M334.500 940V1037.500H495M628 1037.500H860M561.500 1068V1528M561.500 1593V1625M992 1037.500H1110M992 1196.500H1110M925 1068V1166M925 1227V1334M1175 1007V992H1336M1240 1037.500H1336M1175 1166V1151H1336M1175 1227V1242H1336M628 1560H1110M1190 1537.500H1336M1190 1582.500H1336"/>
                <g>
                  <use href="#ar" transform="translate(334.500 987) rotate(90)"/><use href="#ar" x="481" y="1037.500"/><use href="#ar" x="710" y="1037.500"/><use href="#ar" x="790" y="1037.500"/>
                  <use href="#ar" transform="translate(561.500 1185) rotate(90)"/><use href="#ar" transform="translate(561.500 1358) rotate(90)"/><use href="#ar" transform="translate(561.500 1629) rotate(90)"/>
                  <use href="#ar" x="1017" y="1037.500"/><use href="#ar" x="1097" y="1037.500"/><use href="#ar" x="1017" y="1196.500"/><use href="#ar" x="1097" y="1196.500"/>
                  <use href="#ar" transform="translate(925 1096) rotate(90)"/><use href="#ar" transform="translate(925 1255) rotate(90)"/><use href="#ar" transform="translate(925 1335) rotate(90)"/>
                  <use href="#ar" x="1322" y="992"/><use href="#ar" x="1257" y="1037.500"/><use href="#ar" x="1334" y="1037.500"/><use href="#ar" x="1322" y="1151"/><use href="#ar" x="1257" y="1242"/><use href="#ar" x="1334" y="1242"/>
                  <use href="#ar" x="835" y="1560"/><use href="#ar" x="915" y="1560"/><use href="#ar" x="1255" y="1537.500"/><use href="#ar" x="1335" y="1537.500"/><use href="#ar" x="1257" y="1582.500"/><use href="#ar" x="1334" y="1582.500"/>
                </g>
                <g class="boxes">
                  <use href="#box" x="334.500" y="924"/><use href="#box" x="1402.500" y="992.500"/><use href="#box" x="1402.500" y="1037.500"/><use href="#box" x="1402.500" y="1151"/><use href="#box" x="1402.500" y="1242.500"/><use href="#box" x="925.500" y="1355.500"/><use href="#box" x="1402.500" y="1537.500"/><use href="#box" x="1402.500" y="1583"/>
                  <text x="334.500" y="928">Page View</text><text x="1402.500" y="996">Anon US Promo ...</text><text x="1402.500" y="1041">Anon INTL Promo ...</text><text x="1402.500" y="1155">Editorial Newslette...</text><text x="1402.500" y="1246">Editorial Newslette...</text><text x="925" y="1359.500">Leave Pristine</text><text x="1402.500" y="1541">Anon Daily Dozen US</text><text x="1402.500" y="1587">Anon Daily Dozen I...</text>
                </g>
                <g class="dias">
                  <use href="#dia" x="561.500" y="1037.500"/><use href="#dia" x="925" y="1037.500"/><use href="#dia" x="1175" y="1037.500"/><use href="#dia" x="925" y="1196.500"/><use href="#dia" x="1175" y="1196.500"/><use href="#dia" x="561.500" y="1560"/><use href="#dia" x="1175" y="1560"/>
                  <g class="kind"><text x="562" y="1027.500">EQUALS</text><text x="925.500" y="1027.500">EQUALS</text><text x="1175.500" y="1027.500">COUNTRY</text><text x="925.500" y="1186.500">EQUALS</text><text x="1175.500" y="1186.500">COUNTRY</text><text x="562" y="1550">EQUALS</text><text x="1175.500" y="1550">COUNTRY</text></g>
                  <text x="562" y="1042">Newsletters</text><text x="925" y="1042">/forbeswomen/?utm...</text><text x="1175.500" y="1042">United States</text><text x="925" y="1201">Daily Dozen Newsle...</text><text x="1175.500" y="1201">United States</text><text x="562" y="1564.500">home</text><text x="1175.500" y="1564.500">United States</text>
                </g>
                <g class="pills">
                  <use href="#py" x="743.500" y="1036"/><use href="#py" x="1050" y="1036"/><use href="#py" x="1050" y="1195"/><use href="#py" x="1279" y="991"/><use href="#py" x="1279" y="1150"/><use href="#py" x="868.500" y="1559"/><use href="#py" x="1288.500" y="1536"/>
                  <use href="#pn" x="1289" y="1036"/><use href="#pn" x="561.500" y="1320"/><use href="#pn" x="925" y="1138"/><use href="#pn" x="925" y="1297.500"/><use href="#pn" x="1289" y="1241"/><use href="#pn" x="1289" y="1581"/>
                  <text x="743.500" y="1041">YES</text><text x="1050" y="1041">YES</text><text x="1050" y="1200">YES</text><text x="1279" y="995">YES</text><text x="1279" y="1154">YES</text><text x="868.500" y="1563.500">YES</text><text x="1288.500" y="1540.500">YES</text>
                  <text x="1289" y="1041">NO</text><text x="561.500" y="1325">NO</text><text x="925" y="1143">NO</text><text x="925" y="1302">NO</text><text x="1289" y="1245.500">NO</text><text x="1289" y="1586">NO</text>
                </g>
                <path d="M1096 893c-3-5-6-8-5-10 2-2 4 1 5 2-1-4-3-9 0-10 2 0 3 3 4 5-1-4-1-8 1-8s3 4 3 7c1-4 1-7 3-7s2 4 2 8c1-3 3-5 4-4 2 1-1 8-2 12l-3 6h-9z" fill="#fff" stroke="#333" stroke-width="2"/>
                <path d="M1101 884v6M1104.500 884v6M1108 884v6" stroke="#333" stroke-width="1.400"/>
              </svg>
              <div class="foot">
                <div class="tpl">Template Library<em class="new">NEW</em></div>
                <div class="zb off"><svg width="32" height="32"><use href="#i-zout"/></svg></div>
                <div class="zb"><svg width="32" height="32"><use href="#i-zin"/></svg></div>
                <div class="zb"><svg width="26" height="26" viewBox="0 0 26 26"><path d="M1 8V1h7M18 1h7v7M25 18v7h-7M8 25H1v-7" fill="none" stroke="#222" stroke-width="2.400"/></svg></div>
              </div>
            </div>
          </div>

          <i class="ssm">SSM</i>
          <div class="hoverbar">
            <i><svg viewBox="0 0 24 24"><path d="M7.500 2.500h9v2h-1v6.800l2.500 2.500v1.500H13V22h-2v-6.700H6v-1.500l2.500-2.500V4.500h-1z"/><path d="M1.500 6l19 17" stroke="#36373a" stroke-width="2.600"/><path d="M2.500 4.500l18.500 17" stroke="#fff" stroke-width="2"/></svg></i>
            <i><svg viewBox="0 0 24 24"><path d="M3 9.500h4l5-5v15l-5-5H3z" fill="none" stroke="#7d7f82" stroke-width="2"/><path d="M15 9a4.500 4.500 0 0 1 0 6M14.500 4.200a8 8 0 0 1 0 15.600" fill="none" stroke="#7d7f82" stroke-width="2"/><path d="M1.500 5l19 17" stroke="#36373a" stroke-width="3"/><path d="M2.500 3.500l19 18" stroke="#7d7f82" stroke-width="2"/></svg></i>
            <i class="more"><svg viewBox="0 0 24 24"><circle cx="12" cy="5" r="2.500"/><circle cx="12" cy="12" r="2.500"/><circle cx="12" cy="19" r="2.500"/></svg></i>
          </div>
          <div class="tip">More options</div>
          <div class="zoomfab"><svg viewBox="0 0 44 44"><circle cx="17" cy="17" r="12" fill="none" stroke="#fff" stroke-width="5"/><path d="M26 26l14 14" stroke="#fff" stroke-width="6"/><path d="M17 11v12M11 17h12" stroke="#fff" stroke-width="4"/></svg></div>
        </div>

        <div class="people">
          <div class="prow">
            <div class="tile speaking">
              <i class="ring"><i>Y</i></i>
              <i class="bars"><b></b><b class="tall"></b><b></b></i>
              <span>Yasmeen Ghazal</span>
            </div>
            <div class="tile"><span>Dawood</span></div>
          </div>
          <div class="prow second">
            <div class="tile wide"><i class="big-n">N</i><span>Narek Khachatryan</span></div>
          </div>
        </div>
      </div>

      <div class="captions">
        <i class="cap-av">Y</i>
        <div><h2>Yasmeen Ghazal</h2><p>will be shown on this bed. based on based on the things before So here we are<br>checking if it's a newsletter. The page we are on. And then we check if it's a specific</p></div>
      </div>
    </div>
  </section>

  <footer class="dock">
    <div class="app run grey"><svg viewBox="0 0 100 100"><rect width="100" height="100" rx="23" fill="#e9ebf2"/><path d="M54 0H23A23 23 0 0 0 0 23v54a23 23 0 0 0 23 23h39c-3-14-4-28-5-41H43C42 38 46 18 54 0z" fill="url(#g-blue2)"/><path d="M27 30v8M74 30v8" stroke="#16222e" stroke-width="5" stroke-linecap="round"/><path d="M20 67c14 17 46 17 60 0" fill="none" stroke="#16222e" stroke-width="4"/><path d="M54 2c-8 18-11 36-11 57h14c1 13 2 27 5 39" fill="none" stroke="#2b5fae" stroke-width="1.500"/></svg></div>
    <div class="app"><svg viewBox="0 0 100 100"><rect width="100" height="100" rx="23" fill="#eef0f2"/><g><rect x="16" y="16" width="19" height="19" rx="5" fill="#6fdc55"/><rect x="41" y="16" width="19" height="19" rx="5" fill="#f2b63a"/><rect x="65" y="16" width="19" height="19" rx="5" fill="#e58a36"/><rect x="16" y="41" width="19" height="19" rx="5" fill="#d32c22"/><rect x="41" y="41" width="19" height="19" rx="5" fill="#9aa0a4"/><rect x="65" y="41" width="19" height="19" rx="5" fill="#e8445c"/><rect x="16" y="65" width="19" height="19" rx="5" fill="#9440cf"/><rect x="41" y="65" width="19" height="19" rx="5" fill="#2f95f5"/><rect x="65" y="65" width="19" height="19" rx="5" fill="#62cdb4"/></g></svg></div>
    <div class="app run grey"><svg viewBox="0 0 100 100"><rect width="100" height="100" rx="23" fill="url(#g-white)"/><circle cx="50" cy="50" r="43" fill="#2d7fe6"/><circle cx="50" cy="50" r="38" fill="none" stroke="#cfe4fb" stroke-width="6" stroke-dasharray="1 2.980"/><path d="M82 24L55 55 45 45z" fill="#f0524a"/><path d="M20 76L55 55 45 45z" fill="#f4f4f6"/></svg></div>
    <div class="app"><svg viewBox="0 0 100 100"><rect width="100" height="100" rx="23" fill="url(#g-green)"/><path d="M50 17c21 0 37 13 37 30S71 78 50 78c-4 0-8 0-11-1-3 3-7 6-12 7 2-3 4-7 3-11-10-5-17-15-17-26 0-17 16-30 37-30z" fill="url(#g-bubble)"/></svg></div>
    <div class="app"><svg viewBox="0 0 100 100"><rect width="100" height="100" rx="23" fill="url(#g-blue)"/><rect x="14" y="28" width="71" height="44" rx="5" fill="#f1f1f1"/><path d="M16 30l30 27c3 3 5 3 8 0l30-27M16 70l24-19M84 70L60 51" fill="none" stroke="#b5b5b5" stroke-width="2"/></svg></div>
    <div class="app"><svg viewBox="0 0 100 100"><clipPath id="mc"><rect width="100" height="100" rx="23"/></clipPath><g clip-path="url(#mc)"><rect width="100" height="100" fill="#eceef1"/><path d="M0 0h22v38L0 12zM48 0h16c2 30 16 38 36 38v40L48 24z" fill="#74d06c"/><path d="M0 42l22 22v36H0z" fill="#df84cf"/><path d="M54 78l26 22H54z" fill="#f6cf46"/><path d="M68-8a34 40 0 0 0 42 44" fill="none" stroke="#b8bcc2" stroke-width="10"/><path d="M25 0h23v60H25z" fill="#2a6fe8"/></g><circle cx="38" cy="63" r="24" fill="#2f74ee" stroke="#fff" stroke-width="4"/><path d="M38 46l11 30-11-7-11 7z" fill="#fff"/></svg></div>
    <div class="app"><svg class="photos" viewBox="0 0 100 100"><rect width="100" height="100" rx="23" fill="#fdfdfd"/><g transform="translate(50 50)"><rect x="-12" y="-43" width="24" height="38" rx="12" fill="#f39a34"/><rect x="-12" y="-43" width="24" height="38" rx="12" fill="#efdf3c" transform="rotate(45)"/><rect x="-12" y="-43" width="24" height="38" rx="12" fill="#b8d54e" transform="rotate(90)"/><rect x="-12" y="-43" width="24" height="38" rx="12" fill="#6cc494" transform="rotate(135)"/><rect x="-12" y="-43" width="24" height="38" rx="12" fill="#6fb0e4" transform="rotate(180)"/><rect x="-12" y="-43" width="24" height="38" rx="12" fill="#9585cf" transform="rotate(225)"/><rect x="-12" y="-43" width="24" height="38" rx="12" fill="#cf8ac2" transform="rotate(270)"/><rect x="-12" y="-43" width="24" height="38" rx="12" fill="#ee6a5c" transform="rotate(315)"/></g></svg></div>
    <div class="app"><svg viewBox="0 0 100 100"><rect width="100" height="100" rx="23" fill="url(#g-green)"/><rect x="15" y="28" width="48" height="44" rx="11" fill="url(#g-bubble)"/><path d="M67 45l16-14c2-1 3 0 3 2v34c0 2-1 3-3 2L67 55z" fill="url(#g-bubble)"/></svg></div>
    <div class="app"><svg viewBox="0 0 100 100"><rect width="100" height="100" rx="23" fill="#f8f8f5"/><path d="M0 31V23A23 23 0 0 1 23 0h54a23 23 0 0 1 23 23v8z" fill="#e4604f"/><text x="50" y="23" font-size="17" font-weight="600" fill="#fff" text-anchor="middle">MAY</text><text x="50" y="84" font-size="60" font-weight="300" fill="#222" text-anchor="middle">7</text></svg></div>
    <div class="app"><svg viewBox="0 0 100 100"><path d="M95 14h8q3 5 3 10v10H95z" fill="#c9c5ba"/><path d="M95 34h11v18H95z" fill="#67b6e8"/><path d="M95 53h11v17H95z" fill="#f0932e"/><path d="M95 70h11q0 14-4 18h-7z" fill="#6dcf5d"/><rect width="100" height="100" rx="23" fill="url(#g-brown)"/><path d="M6 8v84" stroke="#8a6738" stroke-width="1.500"/><circle cx="52" cy="50" r="31" fill="none" stroke="#86653a" stroke-width="2.500"/><ellipse cx="52" cy="43" rx="10" ry="12" fill="#8a683c"/><path d="M30 72c6-16 38-16 44 0-9 12-35 12-44 0z" fill="#8a683c"/></svg></div>
    <div class="app"><svg viewBox="0 0 100 100"><rect width="100" height="100" rx="23" fill="#fbfbfa"/><g stroke-width="2" fill="none"><circle cx="20" cy="25" r="7.500" stroke="#2f74ee"/><circle cx="20" cy="50" r="7.500" stroke="#e5493e"/><circle cx="20" cy="75" r="7.500" stroke="#ef9a35"/></g><circle cx="20" cy="25" r="5" fill="#2f74ee"/><circle cx="20" cy="50" r="5" fill="#e5493e"/><circle cx="20" cy="75" r="5" fill="#ef9a35"/><path d="M38 25h52M38 50h52M38 75h52" stroke="#b6b6b8" stroke-width="2"/></svg></div>
    <div class="app"><svg viewBox="0 0 100 100"><rect width="100" height="100" rx="23" fill="#eeeeea"/><path d="M0 26V23A23 23 0 0 1 23 0h54a23 23 0 0 1 23 23v3z" fill="url(#g-gold)"/><path d="M0 26h100" stroke="#a59a7c" stroke-width="2"/><path d="M2 31h96" stroke="#bbb" stroke-width="2" stroke-dasharray="1.500 2.500"/><path d="M0 50h100M0 75h100" stroke="#d4d4d0" stroke-width="2"/></svg></div>
    <div class="app"><svg viewBox="0 0 100 100"><rect width="100" height="100" rx="23" fill="url(#g-tv)"/><use href="#i-apple" x="11" y="28" width="34" height="40" fill="#fff"/><text x="46" y="65" font-size="42" font-weight="500" fill="#fff" textLength="39">tv</text></svg></div>
    <div class="app"><svg viewBox="0 0 100 100"><rect width="100" height="100" rx="23" fill="url(#g-red)"/><path d="M38 29l34-13v49M38 29v43" fill="none" stroke="#fff" stroke-width="5"/><path d="M36 26l38-11v15L36 42z" fill="#fff"/><ellipse cx="29" cy="74" rx="10" ry="8" fill="#fff"/><ellipse cx="64" cy="67" rx="10" ry="8" fill="#fff"/></svg></div>
    <div class="app"><svg viewBox="0 0 100 100"><rect width="100" height="100" rx="23" fill="url(#g-purple)"/><path d="M38 80a34 34 0 1 1 24 0M38 64a21 21 0 1 1 24 0" fill="none" stroke="#fff" stroke-width="4.500"/><circle cx="50" cy="45" r="8" fill="#fff"/><path d="M42 62q0-6 8-6t8 6l-3 22q-1 5-5 5t-5-5z" fill="#fff"/></svg></div>
    <div class="app"><svg viewBox="0 0 100 100"><rect width="100" height="100" rx="23" fill="url(#g-blue2)"/><path d="M26 14h48l5 31H21z" fill="#f5f5f7"/><path d="M31 17h38l2 19H29z" fill="#e4e6ea"/><circle cx="50" cy="26" r="9" fill="#3fa9e8"/><path d="M50 26V17a9 9 0 0 0-9 9z" fill="#b4458e"/><path d="M50 26h-9a9 9 0 0 0 9 9z" fill="#f0a93c"/><path d="M50 26v9a9 9 0 0 0 9-9z" fill="#6cc657"/><path d="M50 45v38" stroke="#dfe3e8" stroke-width="4"/><rect x="34" y="82" width="32" height="5" rx="2" fill="#e8e8ea"/></svg></div>
    <div class="app"><svg viewBox="0 0 100 100"><rect width="100" height="100" rx="23" fill="url(#g-green)"/><g fill="#f4f6f2"><rect x="18" y="65" width="13" height="21" rx="2"/><rect x="35" y="47" width="13" height="39" rx="2"/><rect x="52" y="15" width="13" height="71" rx="2"/><rect x="70" y="33" width="13" height="53" rx="2"/></g></svg></div>
    <div class="app"><svg viewBox="0 0 100 100"><rect width="100" height="100" rx="23" fill="url(#g-orange)"/><path d="M16 84L22 68 76 20q6-4 5 3L30 77z" fill="#f7f3ee"/><path d="M20 85h64" stroke="#fbd5a8" stroke-width="3"/><path d="M48 44l8 8" stroke="#b8a898" stroke-width="1.500"/></svg></div>
    <div class="app"><svg viewBox="0 0 100 100"><rect width="100" height="100" rx="23" fill="url(#g-blue2)"/><g stroke="#f7f9fc" stroke-width="8" stroke-linecap="round" fill="none"><path d="M44 22l33 55M56 22L35 60M19 61h62M25 77l3-5"/></g></svg></div>
    <div class="app"><svg viewBox="0 0 100 100"><rect width="100" height="100" rx="23" fill="url(#g-grey)"/><circle cx="50" cy="50" r="43" fill="#2c2d2e"/><circle cx="50" cy="50" r="39" fill="none" stroke="#8a8c8e" stroke-width="5" stroke-dasharray="2 2"/><circle cx="50" cy="50" r="31" fill="none" stroke="#8f9193" stroke-width="6"/><circle cx="50" cy="50" r="17" fill="none" stroke="#6f7173" stroke-width="5"/><path d="M50 50h34M50 50L33 80M50 50L33 20" stroke="#9a9c9e" stroke-width="5"/><circle cx="50" cy="50" r="4" fill="#333"/></svg><b class="badge">2</b></div>
    <i class="dsep"></i>
    <div class="app run"><svg viewBox="0 0 100 100"><rect width="100" height="100" rx="23" fill="#f5f5f5"/><circle cx="50" cy="50" r="43" fill="#3fa0dc"/><path d="M22 52L70 32 63 72 48 61z" fill="#fff"/><path d="M42 57l28-25-22 29-3 12z" fill="#c5dcef"/></svg></div>
    <div class="app run"><svg viewBox="0 0 100 100"><circle cx="28" cy="29" r="28" fill="#2b82d0"/><circle cx="72" cy="71" r="28" fill="#2b74cc"/><circle cx="50" cy="50" r="47" fill="url(#g-sky)"/><path d="M66 35c-3-14-32-12-31 2 1 15 33 8 32 25-2 16-33 15-35 0" fill="none" stroke="#fff" stroke-width="9" stroke-linecap="round"/></svg></div>
    <div class="app run"><svg viewBox="0 0 100 100"><rect width="100" height="100" rx="23" fill="url(#g-bt)"/><path d="M30 32l40 36-21 16V17l21 16-40 36" fill="none" stroke="#fff" stroke-width="4.500"/></svg></div>
    <div class="app run"><svg viewBox="0 0 100 100"><rect width="100" height="100" rx="23" fill="#c3ccd4"/><rect x="3" y="4" width="94" height="92" rx="20" fill="#000"/><rect x="10" y="11" width="80" height="78" rx="14" fill="#232324"/><path d="M17 19l11 7-11 7M34 39h14" fill="none" stroke="#fff" stroke-width="3.500"/></svg></div>
    <div class="app run"><svg viewBox="0 0 100 100"><rect width="100" height="100" rx="23" fill="#f3f1ef"/><clipPath id="pv"><rect x="7" y="8" width="86" height="84" rx="16"/></clipPath><g clip-path="url(#pv)"><rect width="100" height="55" fill="#9dbaeb"/><rect y="54" width="100" height="50" fill="#2a3d70"/><path d="M0 78l20-4 20 8 20-2v20H0z" fill="#a5a48c"/><path d="M10 68l30 4 20-2 20 6-40 2z" fill="#dfe8ee"/></g><path d="M56 70h36l9 28q1 7-9 7H54q-9 0-8-7z" fill="#c9ced3"/><path d="M60 78l10 4 14-6 6 14H58z" fill="#8f959c"/><path d="M54 92h42l3 9H51z" fill="#f8f8f8"/><rect x="52" y="50" width="43" height="22" rx="7" fill="#141414"/></svg></div>
    <i class="dsep"></i>
    <div class="app"><svg viewBox="0 0 100 100"><path d="M18-5h41l26 36v75H18z" fill="#f3f3f3"/><path d="M23 2h35v24H23z" fill="#8d8f90"/><path d="M18-2h5v110h-5z" fill="#222"/><path d="M59-5l26 36H64z" fill="#d6d6d6"/><rect x="23" y="54" width="62" height="53" fill="#ecd94e"/><text x="82" y="39" font-size="12" font-weight="500" text-anchor="end" fill="#222" textLength="25">UP &amp;</text><text x="82" y="51" font-size="13" font-weight="500" text-anchor="end" fill="#222" textLength="36">GOING</text><text x="83" y="101" font-size="47" font-weight="700" text-anchor="end" fill="#222" textLength="54">JS</text></svg></div>
    <div class="app"><svg viewBox="0 0 100 100"><path d="M8 8L18-3l12 4 8-9 12 9 12-8 9 10 12-3 9 10-16 8H20z" fill="#d9d9d9"/><path d="M20 0l12 10M36-4l6 14M60-6l-6 14M76 2L66 12" stroke="#666" stroke-width="3"/><path d="M46 3l10 4" stroke="#5bd0a0" stroke-width="4"/><path d="M68 3l5 4" stroke="#c8703a" stroke-width="3"/><path d="M4 6q46 18 92 0L84 97q-1 8-16 8H34q-16 0-17-8z" fill="#ebecee"/><path d="M4 6q46 18 92 0" fill="none" stroke="#fff" stroke-width="3"/><path d="M26 26l20 14-8 24-14-12zM56 22l22 6-10 26-16-10zM40 66l24-4 4 22-22 8z" fill="#e1e3e6"/></svg></div>
  </footer>
</main>
</body>
</html>
```
FILE: styles.css
```css
* { box-sizing: border-box; }
html, body { margin: 0; width: 3456px; height: 2234px; overflow: hidden; }
body { position: relative; font-family: Inter, "DejaVu Sans", sans-serif; background: #07020f; }
i, em { font-style: normal; }
svg { flex: none; display: block; }
.sprite { position: absolute; width: 0; height: 0; }
.wallpaper { position: absolute; inset: 0; width: 3456px; height: 2234px; }

/* menu bar */
.menubar { position: relative; height: 74px; display: flex; justify-content: space-between; color: #f2eff1; font-size: 26px; padding: 0 34px 0 38px;
  background: linear-gradient(90deg, #220a22 0, #250c1c 30%, #271621 48%, #35222f 62%, #4d3947 73%, #685263 84%, #7d6872 93%, #88747c 100%); }
.menus { display: grid; grid-template-columns: 69px 118px 84px 88px 100px 128px 176px 137px 80px; align-items: center; white-space: nowrap; letter-spacing: -.3px; }
.menus b { font-weight: 700; }
.menus .apple { width: 28px; height: 33px; fill: #f2f2f2; margin-top: -4px; }
.status { display: flex; align-items: center; fill: currentColor; filter: drop-shadow(0 3px 3px rgba(0,0,0,.25)); }
.status > svg:nth-child(1) { margin-right: 48px; }
.status > svg:nth-child(2) { margin-right: 38px; }
.status > svg:nth-child(3) { margin-right: 41px; }
.status > svg:nth-child(4) { margin-right: 38px; }
.status > svg:nth-child(5) { margin-right: 41px; }
.input-a { width: 32px; height: 32px; border-radius: 5px; background: #f0eef0; color: #5e4a59; text-align: center; font-size: 25px; line-height: 32px; margin-right: 37px; }
.status > svg:nth-child(7) { margin-right: 34px; }
.status > svg:nth-child(8) { margin-right: 37px; }
.status > svg:nth-child(9) { margin-right: 28px; }
.status > svg:nth-child(10) { margin-right: 10px; }
.privacy-dot { width: 10px; height: 10px; border-radius: 50%; background: #e0923c; margin-right: 25px; margin-top: 4px; }
.date, .time { white-space: nowrap; letter-spacing: -.6px; }
.date { width: 141px; }
.time { width: 69px; }

.desktop { position: relative; height: 2160px; }

/* window behind */
.chat-window { position: absolute; left: 534px; top: 1900px; width: 2513px; height: 104px; border-radius: 20px; overflow: hidden; background: #a6a6a6; display: flex; align-items: flex-end; }
.chat-row { height: 24px; width: 645px; border-right: 2px solid #989898; display: flex; align-items: center; padding-left: 38px; font: 500 29px "Noto Sans", sans-serif; color: #1c1c1c; white-space: nowrap; letter-spacing: -1.400px; }
.chat-row i { border-radius: 50%; height: 46px; background: #333; margin-top: -16px; }
.chat-row .av0 { width: 60px; background: #9eb0ba; }
.chat-row .av1 { width: 40px; background: #2b2b2b; margin-left: -20px; }
.chat-row .av2 { width: 28px; height: 30px; margin: -10px 6px 0 14px; background: #2b2b2b; }

/* browser window */
.safari { position: absolute; left: 30px; top: 2px; width: 3408px; height: 1983px; border-radius: 20px; overflow: hidden; background: #202124; box-shadow: 0 0 0 1px rgba(90,90,90,.6), 0 20px 60px rgba(0,0,0,.35); }
.toolbar { height: 104px; background: #f6f4f5; display: flex; align-items: center; padding-left: 40px; stroke-width: 3; stroke: #6b696a; fill: none; }
.lights { display: flex; gap: 16px; width: 156px; }
.lights i { width: 24px; height: 24px; border-radius: 50%; border: 1px solid rgba(0,0,0,.12); }
.lights .red { background: #ee6a5f; } .lights .yellow { background: #f5bd4f; } .lights .green { background: #61c454; }
.sidebar-ic { width: 39px; height: 31px; stroke-width: 2.600; }
.tsep { width: 2px; height: 36px; background: #e2e0e1; margin: 0 10px 0 13px; }
.chev { width: 16px; height: 10px; margin-right: 51px; }
.nav-ic { width: 16px; height: 28px; stroke: #b4b2b3; stroke-width: 2.800; margin-right: 56px; }
.nav-ic.next { margin-right: 537px; }
.shield { width: 28px; height: 33px; margin-right: 33px; }
.address { width: 1382px; height: 56px; border: 2px solid #dad8d9; border-radius: 13px; display: flex; align-items: center; font-size: 26px; color: #454344; stroke: none; letter-spacing: -.35px; padding-top: 2px; }
.address span { width: 702px; }
.lock { width: 16px; height: 23px; margin: 0 14px 0 571px; fill: #9c9a9b; }
.rec { width: 19px; height: 27px; color: #eb4d3d; fill: #eb4d3d; margin-right: 22px; }
.reload { width: 24px; height: 26px; }
.tools { display: flex; align-items: center; margin-left: 719px; gap: 43px; stroke-width: 2.600; }
.tools svg:nth-child(2) { margin-top: -6px; }

.tabs { height: 57px; display: grid; grid-template-columns: 341px 342px 342px 342px 342px 340px 340px 340px 341px 338px; background: #e9e7e8; border-bottom: 1px solid #000; font-size: 21.500px; color: #6c6a6b; }
.tab { border-right: 2px solid #d3d1d2; box-shadow: inset 0 3px 2px -1px #cfcdce; display: flex; align-items: center; justify-content: center; gap: 11px; white-space: nowrap; letter-spacing: -.2px; padding-top: 2px; }
.tab:first-child { padding-right: 4px; }
.tab.active { background: #f6f4f5; color: #3f3d3e; border: 0; box-shadow: none; justify-content: flex-start; padding-left: 49px; letter-spacing: 0; }
.tabmic { margin-left: 18px; color: #8d8b8c; fill: #8d8b8c; }
.hy { font: 20px "Noto Sans", "DejaVu Sans", sans-serif; }
.fav { width: 32px; height: 32px; border-radius: 6px; background: #9293a0; color: #fff; font: 700 20px/32px Inter, sans-serif; text-align: center; }
.fav-ns { background: #2d7540; border-radius: 2px; font-weight: 400; font-size: 22px; line-height: 28px; }

/* meet */
.meet { padding: 39px 0 0 40px; width: 4300px; }
.presenter { height: 106px; border-radius: 20px; background: #3c4043; border: 1px solid #44474b; display: flex; align-items: center; padding-left: 42px; gap: 39px; color: #fff; font-size: 35px; font-weight: 500; }
.avatar { width: 60px; height: 60px; border-radius: 50%; background: #78909c; text-align: center; font: 34px/60px Roboto, sans-serif; }
.stage { display: flex; gap: 44px; margin-top: 41px; }

.screen { position: relative; width: 2176px; height: 1360px; border-radius: 18px; overflow: hidden; background: #fff; color: #e8e8e8; }
.c-tabs { height: 67px; background: #353535; display: flex; gap: 10px; padding: 7px 0 18px 138px; font-size: 20px; }
.c-tab { width: 140px; height: 42px; border-radius: 12px; background: #1a1a1a; display: flex; align-items: center; padding-left: 11px; gap: 12px; flex: none; }
.c-tab span { width: 44px; overflow: hidden; white-space: nowrap; letter-spacing: -.7px; color: #d8d8d8; mask-image: linear-gradient(90deg, #000 65%, rgba(0,0,0,.15)); }
.c-tab .x { width: 13px; height: 13px; color: #e6e6e6; margin-left: 4px; }
.c-tab.pin { width: 59px; padding-left: 17px; }
.c-tab.on { background: none; }
.c-tab.rec-tab span { width: 14px; }
.rec-tab svg:nth-child(3) { margin-left: -6px; }
.rec-tab .x { margin-left: 6px; }
.sb, .ff, .zz { width: 26px; text-align: center; font-weight: 800; }
.sb { background: #e8447f; color: #fff; width: 20px; height: 26px; line-height: 26px; margin: 0 3px; }
.ff { font: 700 25px "Liberation Serif", serif; color: #fff; }
.zz { color: #060606; font-size: 26px; font-weight: 900; }
.c-new { width: 42px; height: 42px; border-radius: 50%; background: #1a1a1a; display: grid; place-items: center; margin-left: -4px; }
.c-chev { width: 15px; height: 10px; margin: 17px 0 0 86px; }
.c-bar { height: 53px; background: #353535; display: flex; align-items: center; padding-left: 4px; fill: none; stroke: #eee; stroke-width: 2.500; }
.omni { width: 1158px; height: 53px; border-radius: 27px; background: #1a1a1a; margin-left: 14px; display: flex; align-items: center; padding-left: 8px; stroke-width: 2.300; stroke: #ccc; }
.omni > svg { margin-right: 22px; }
.tune { width: 36px; height: 38px; border-radius: 50%; background: #353535; display: grid; place-items: center; stroke: #eee; }
.url { width: 955px; margin-left: 12px; font-size: 21.300px; letter-spacing: -.1px; color: #969696; white-space: nowrap; }
.url b { color: #f2f2f2; font-weight: 400; }
.exts { display: flex; margin-left: 13px; stroke: none; }
.exts i { width: 54.500px; display: grid; place-items: center; }
.gsq { width: 24px; height: 25px; background: #6a6a6a; color: #eee; font-size: 18px; font-weight: 500; text-align: center; line-height: 25px; }
.c-sep { width: 2px; height: 24px; background: #1c1c1c; margin: 0 12px; }
.c-av { width: 30px; height: 30px; border-radius: 50%; background: #78909c; font-size: 15px; line-height: 30px; text-align: center; margin: 0 20px 0 13px; }
.finish { width: 184px; height: 53px; border-radius: 27px; background: #1f4c6f; color: #cfe3f3; font-size: 20px; display: flex; align-items: center; padding-left: 16px; gap: 17px; white-space: nowrap; fill: #cfe3f3; stroke: none; letter-spacing: -.2px; }
.c-marks { height: 61px; padding: 0 0 1px 16px; background: #353535; border-bottom: 2px solid #5d5f61; display: grid; align-items: center; grid-template-columns: 95px 97px 144px 106px 177px 195px 180px 104px 171px 688px 26px auto; font-size: 19px; letter-spacing: -.3px; }
.c-marks div { display: flex; align-items: center; gap: 12px; white-space: nowrap; }
.c-marks .tight { gap: 8px; }
.fold { width: 25px; height: 20px; color: #c8c8c8; }
.ns2 { width: 24px; height: 25px; background: #2f8043; font-size: 17px; line-height: 22px; text-align: center; margin-right: -2px; }
.msep { width: 2px; height: 24px; background: #1a1a1a; }

.z-head { height: 121px; background: #030c26; display: flex; align-items: center; padding-left: 28px; color: #fff; stroke: #fff; stroke-width: 2.200; fill: none; }
.z-mark { width: 47px; height: 47px; margin-right: 13px; }
.z-head strong { width: 171px; font: 900 45px/50px Lato, sans-serif; letter-spacing: 1.200px; margin-right: 15px; }
.z-name { width: 693px; font-size: 24px; }
.z-head nav { display: grid; grid-template-columns: 166px 177px 161px 119px 145px; font-size: 23px; font-weight: 600; }
.cur { color: #5fdcae; text-decoration: underline; text-underline-offset: 5px; }
.z-sep { width: 2px; height: 46px; background: #c8ccd6; margin-right: 38px; }
.z-head em { width: 116px; height: 36px; border-radius: 6px; background: #62e0b2; color: #0a3a35; font-size: 15.500px; font-weight: 700; line-height: 36px; text-align: center; margin-right: 37px; }
.gear { margin: 0 42px 0 43px; }
.z-body { padding: 24px 58px 0 60px; }
.card { height: 983px; border-radius: 16px; overflow: hidden; background: #fafafa; box-shadow: 0 0 14px rgba(0,0,0,.14); color: #1c1c1c; }
.rules { height: 108px; display: grid; grid-template-columns: 94px 150px 117px 153px 233px 174px 178px 196px 178px 174px 235px 176px; background: #f1f1f1; border-bottom: 2px solid #e2e2e2; font-size: 23px; letter-spacing: -.2px; }
.rules div { display: flex; align-items: center; justify-content: center; border-right: 2px solid #e0e0e0; white-space: nowrap; padding-top: 2px; }
.rules div:last-child { border: 0; }
.rules .acc { padding-right: 14px; }
.rules .srch { background: #fff; fill: none; stroke: #111; stroke-width: 2.200; }
.new { margin: 2px 0 0 15px; height: 26px; width: 59px; border-radius: 7px; background: #63d547; color: #fff; font-size: 16.500px; font-weight: 700; line-height: 26px; text-align: center; letter-spacing: .3px; }
.flow { width: 2058px; height: 769px; }
.flow text { font-size: 12px; font-weight: 500; text-anchor: middle; fill: #fff; }
.edge { fill: none; stroke: #111; stroke-width: 2.600; }
.dias { fill: #3364ee; }
.flow .kind text { font-size: 9.500px; text-decoration: underline; }
.pills { fill: #fff; stroke: #a9a9a9; stroke-width: 1.800; }
.flow .pills text { fill: #222; stroke: none; font-size: 9.500px; font-weight: 600; }
.foot { height: 106px; border-top: 2px solid #ebebeb; display: flex; justify-content: flex-end; align-items: center; padding-right: 33px; }
.tpl { width: 289px; height: 75px; border: 3px dashed #3a2f6c; border-radius: 9px; background: #fff; display: flex; align-items: center; padding-left: 10px; font-size: 23px; margin-right: 24px; white-space: nowrap; letter-spacing: -.1px; }
.zb { width: 67px; height: 68px; border: 2px solid #ececec; border-radius: 10px; display: grid; place-items: center; margin-right: 24px; color: #222; }
.zb:last-child { margin-right: 0; }
.off { color: #e4e4e4; }

.ssm { position: absolute; left: 2140px; top: 535px; width: 38px; height: 38px; border-radius: 50%; background: #5090e0; color: #fff; font-size: 11px; font-weight: 700; line-height: 38px; text-align: center; }
.hoverbar { position: absolute; left: 923px; top: 624px; width: 331px; height: 111px; border-radius: 56px; background: rgba(48,49,51,.95); box-shadow: 0 3px 8px rgba(0,0,0,.35); display: grid; grid-template-columns: 110px 110px 111px; fill: #fff; }
.hoverbar svg { width: 50px; height: 50px; }
.hoverbar i { display: grid; place-items: center; }
.hoverbar .more { border-radius: 50%; background: rgba(255,255,255,.04); }
.tip { position: absolute; left: 1085px; top: 746px; width: 229px; height: 59px; border-radius: 9px; background: #3e4246; color: #e8eaed; font: 28.500px/59px Roboto, sans-serif; letter-spacing: 1.600px; text-align: center; }
.zoomfab { position: absolute; left: 2015px; top: 1200px; width: 111px; height: 111px; border-radius: 50%; background: rgba(112,114,116,.82); box-shadow: 0 3px 8px rgba(0,0,0,.4); display: grid; place-items: center; }
.zoomfab svg { width: 44px; height: 44px; margin-right: 3px; }

.people { display: flex; flex-direction: column; gap: 30px; margin-top: -1px; }
.prow { display: flex; gap: 30px; }
.second { padding-left: 402px; }
.tile { position: relative; flex: none; width: 978px; height: 667px; border-radius: 20px; background: #3c4043; border: 1px solid #46494c; display: grid; place-items: center; }
.tile span { position: absolute; left: 40px; bottom: 27px; font-size: 34px; line-height: 44px; font-weight: 500; letter-spacing: .55px; color: #fff; text-shadow: 0 2px 3px rgba(0,0,0,.5); white-space: nowrap; }
.speaking { border: 9px solid #6f9aee; }
.tile.speaking span { left: 32px; bottom: 19px; }
.ring { width: 469px; height: 469px; border-radius: 50%; background: #5a5b5e; display: grid; place-items: center; }
.ring i { width: 295px; height: 295px; border-radius: 50%; background: #7e909b; color: #fff; font: 400 160px/297px Roboto, sans-serif; text-align: center; }
.bars { position: absolute; right: 21px; top: 21px; width: 66px; height: 66px; border-radius: 50%; background: #376bd0; display: flex; align-items: center; justify-content: center; gap: 5px; }
.bars b { width: 10px; height: 24px; border-radius: 5px; background: #fff; }
.bars .tall { height: 34px; }
.wide { display: block; width: 1184px; }
.big-n { display: block; width: 356px; height: 356px; border-radius: 50%; background: #7959b9; color: #fff; font: 400 193px/360px Roboto, sans-serif; text-align: center; margin: 155px auto 0; }

.captions { display: flex; gap: 100px; padding: 84px 0 0 857px; color: #fff; font-family: Roboto, sans-serif; }
.cap-av { width: 102px; height: 102px; border-radius: 50%; background: #78909c; font-size: 52px; line-height: 102px; text-align: center; }
.captions h2 { margin: 0; font-size: 39px; line-height: 48px; font-weight: 500; letter-spacing: .6px; }
.captions p { margin: 0; font-size: 59px; line-height: 70px; letter-spacing: .6px; white-space: nowrap; }

/* dock */
.dock { position: absolute; left: 98px; top: 2012px; width: 3260px; height: 138px; border-radius: 44px; border: 2px solid rgba(255,255,255,.25); display: flex; padding-left: 4px; background: linear-gradient(90deg, #d8d7d5 0, #d4d2d0 24%, #c9b6b6 27%, #83686f 31%, #605a6b 35%, #665a70 50%, #7d6681 68%, #756c76 72%, #757470 78%, #8b8a85 85%, #6c6a69 89%, #5c595b 92%, #a55a5c 94%, #d95c5c 96%, #f0645a 100%) border-box; }
.app { position: relative; width: 116.400px; flex: none; padding: 18px 0 0 14.700px; }
.app > svg { width: 87px; height: 87px; overflow: visible; filter: drop-shadow(0 2px 2px rgba(0,0,0,.3)); }
.photos g rect { mix-blend-mode: multiply; }
.run::after { content: ""; position: absolute; left: 54px; bottom: 2px; width: 8px; height: 8px; border-radius: 50%; background: #111; }
.run.grey::after { background: #5c5b5b; }
.dsep { width: 2px; height: 102px; margin: 16px 25px 0; background: #403d40; }
.badge { position: absolute; right: 4px; top: 8px; width: 41px; height: 41px; border-radius: 50%; background: #e8503f; color: #fff; font: 24px/41px Inter, sans-serif; text-align: center; }
```
